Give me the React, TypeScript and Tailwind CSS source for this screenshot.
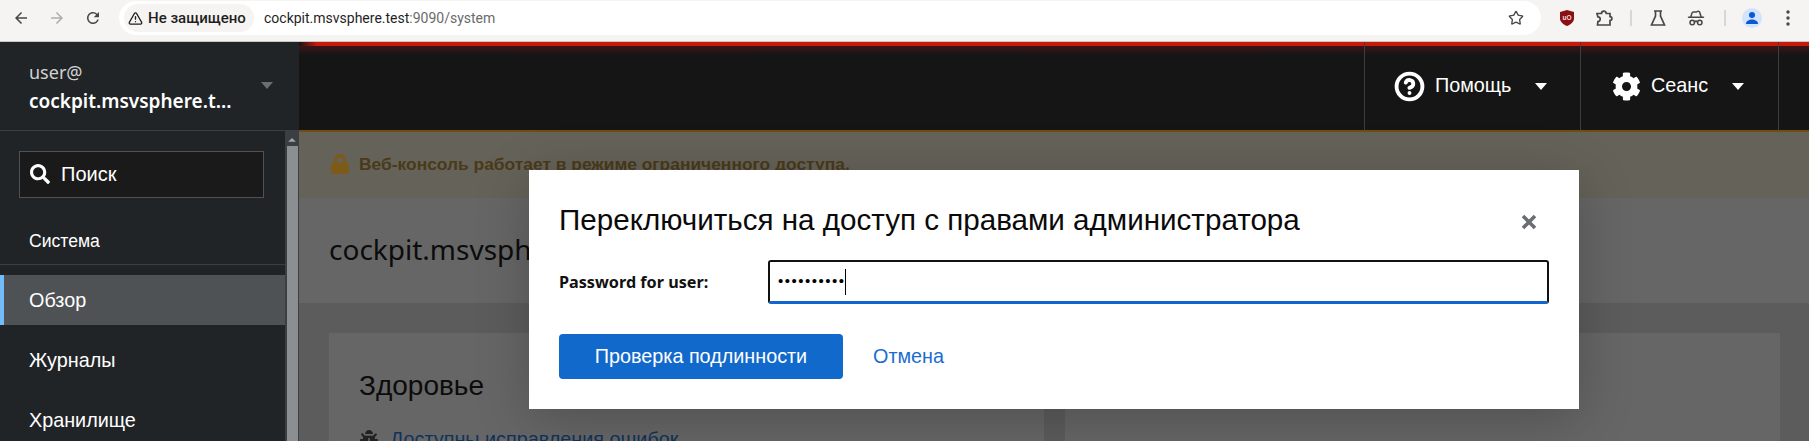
import React from "react";
import { Star, TriangleAlert, HatGlasses, CircleHelp } from "lucide-react";
import { FaCog, FaSearch, FaLock, FaBug } from "react-icons/fa";

const Caret = ({ cls }: { cls: string }) => (
  <svg width="12" height="7" viewBox="0 0 12 7" className={cls}><path d="M0 0h12L6 7z" fill="currentColor" /></svg>
);

const Nav = ({ label, active }: { label: string; active?: boolean }) => (
  <div className={`flex h-[50px] items-center pt-[2px] text-[19.8px] text-white ${active ? "border-l-4 border-[#73bcf7] bg-[#4f5255] pl-[25px]" : "pl-[29px]"}`}>{label}</div>
);

const ArrowIcon = ({ cls, flip }: { cls: string; flip?: boolean }) => (
  <svg width="18" height="18" viewBox="0 0 24 24" className={`${cls} ${flip ? "rotate-180" : ""}`}>
    <path d="M20 11H7.830l5.590-5.590L12 4l-8 8 8 8 1.410-1.410L7.830 13H20v-2z" fill="currentColor" />
  </svg>
);

const Menu = ({ w, label, icon }: { w: string; label: string; icon: React.ReactNode }) => (
  <div className={`flex h-full items-center border-l border-[#3c3f42] ${w}`}>
    {icon}
    <span className="ml-[10px] text-[19.8px] text-white">{label}</span>
    <Caret cls="ml-[24px] text-white" />
  </div>
);

export default function App() {
  return (
    <div className="flex h-[441px] w-[1809px] flex-col overflow-hidden bg-white font-['Liberation_Sans',sans-serif]">
      <div className="flex h-[42px] shrink-0 items-start border-b border-[#c8c8c6] bg-[#f6f4f2]">
        <div className="flex h-[36px] w-[119px] items-center gap-[18px] pl-[12px] text-[#474747]">
          <ArrowIcon cls="" />
          <ArrowIcon cls="text-[#adadab]" flip />
          <svg width="18" height="18" viewBox="0 0 24 24"><path d="M17.650 6.350A7.958 7.958 0 0012 4c-4.420 0-7.990 3.580-7.990 8s3.570 8 7.990 8c3.730 0 6.840-2.550 7.730-6h-2.080A5.990 5.990 0 0112 18c-3.310 0-6-2.690-6-6s2.690-6 6-6c1.660 0 3.140.690 4.220 1.780L13 11h7V4l-2.350 2.350z" fill="currentColor" /></svg>
        </div>
        <div className="mt-px flex h-[34px] w-[1422px] items-center rounded-full bg-white pl-[5px] pr-[16px]">
          <div className="flex h-[28px] w-[130px] items-center gap-[5px] rounded-full bg-[#f6f4f2] pl-[4px] font-['Roboto',sans-serif] text-[15px] font-medium text-[#1f1f1f]">
            <TriangleAlert size={15} strokeWidth={2.2} />
            <span>Не защищено</span>
          </div>
          <div className="ml-[10px] font-['Roboto',sans-serif] text-[14px] text-[#1f1f1f]">cockpit.msvsphere.test<span className="text-[#6a6a6a]">:9090/system</span></div>
          <Star size={16} strokeWidth={2} className="ml-auto mr-[1px] text-[#474747]" />
        </div>
        <div className="flex h-[36px] flex-1 items-center pl-[19px] text-[#474747]">
          <svg width="14" height="16" viewBox="0 0 14 16">
            <path d="M7 0l7 2v6.500c0 3.500-3.500 6-7 7.500-3.500-1.500-7-4-7-7.500V2z" fill="#8a1014" />
            <text x="7" y="9.500" textAnchor="middle" fontSize="6.500" fontWeight="700" fill="#f3dede">uO</text>
          </svg>
          <svg width="18" height="18" viewBox="0 0 18 18" className="ml-[21px]" fill="none" stroke="currentColor" strokeWidth="1.700">
            <path d="M2 4.500h4.500a2.400 2.400 0 0 1 4.800 0H15v3.200a1.900 1.900 0 0 1 0 3.800V16H2.500l.4-3.500a2.300 2.300 0 0 0 0-4.600L2 4.500z" />
          </svg>
          <div className="ml-[17px] h-[16px] w-[2px] bg-[#d9d7d4]" />
          <svg width="16" height="16" viewBox="0 0 16 16" className="ml-[18px]" fill="none" stroke="currentColor" strokeWidth="1.700">
            <path d="M4 1h8M5.500 1v5L1.500 15h13l-4-9V1" />
          </svg>
          <HatGlasses size={18} className="ml-[21px]" />
          <div className="ml-[19px] h-[16px] w-[2px] bg-[#d9d7d4]" />
          <div className="ml-[16px] flex h-[20px] w-[20px] items-center justify-center rounded-full bg-[#d3e3fd]">
            <svg width="14" height="14" viewBox="0 0 14 14"><circle cx="7" cy="4" r="3" fill="#0b57d0" /><path d="M1 13c0-3 3-4.500 6-4.500s6 1.500 6 4.500z" fill="#0b57d0" /></svg>
          </div>
          <svg width="4" height="16" viewBox="0 0 4 16" className="ml-[24px]" fill="currentColor"><circle cx="2" cy="2" r="1.700" /><circle cx="2" cy="8" r="1.700" /><circle cx="2" cy="14" r="1.700" /></svg>
        </div>
      </div>

      <div className="flex min-h-0 flex-1">
        <aside className="flex w-[299px] shrink-0 flex-col bg-[#212427]">
          <div className="flex h-[89px] shrink-0 items-center justify-between border-b border-[#3c3f42] pl-[29px] pr-[26px]">
            <div className="pt-[1px]">
              <div className="font-['Noto_Sans',sans-serif] text-[18px] leading-[26px] text-[#d2d2d2]">user@</div>
              <div className="mt-[3px] font-['Noto_Sans',sans-serif] text-[19px] font-semibold leading-[26px] text-white">cockpit.msvsphere.t...</div>
            </div>
            <Caret cls="mb-[2px] text-[#6a6e73]" />
          </div>
          <div className="flex min-h-0 flex-1">
            <div className="w-[285px]">
              <div className="ml-[19px] mt-[20px] flex h-[47px] w-[245px] items-center border border-[#4f5255] bg-[#1a1a1a] pb-[2px] pl-[10px] text-[20px] text-white">
                <FaSearch size={20} />
                <span className="ml-[11px]">Поиск</span>
              </div>
              <div className="flex h-[67px] items-end border-b border-[#3c3f42] pb-[10px] pl-[29px] text-[17.6px] text-white">Система</div>
              <div className="mt-[10px] flex flex-col gap-[10px]">
                <Nav label="Обзор" active />
                <Nav label="Журналы" />
                <Nav label="Хранилище" />
              </div>
            </div>
            <div className="flex w-[14px] flex-col items-center bg-[#3b3f43]">
              <svg width="8" height="4" viewBox="0 0 8 4" className="mt-[7px] text-[#a3a6a8]"><path d="M0 4h8L4 0z" fill="currentColor" /></svg>
              <div className="mt-[4px] h-full w-[11px] bg-[#8b8f92]" />
            </div>
          </div>
        </aside>

        <div className="relative flex min-w-0 flex-1 flex-col">
          <header className="relative flex h-[90px] shrink-0 justify-end border-b-2 border-[#6f4e13] bg-[#151515]">
            <div className="absolute inset-x-0 top-0">
              <div className="h-[4px] bg-[linear-gradient(to_right,#151515,#c9190b_18px)]" />
              <div className="h-[9px] bg-gradient-to-b from-[#3d1316] to-[#151515]" />
            </div>
            <div className="relative flex h-full">
              <Menu w="w-[216px] pl-[29px]" label="Помощь" icon={<CircleHelp size={31} strokeWidth={3} className="text-white" />} />
              <Menu w="w-[198px] pl-[31px]" label="Сеанс" icon={<FaCog size={29} className="text-white" />} />
              <div className="w-[31px] border-l border-[#3c3f42]" />
            </div>
          </header>

          <main className="flex min-h-0 flex-1 flex-col overflow-hidden bg-[#5c5c5c]">
            <div className="flex h-[66px] shrink-0 items-center bg-[#656259] pb-[2px] pl-[31px] text-[17.4px] font-bold text-[#4a3a1a]">
              <FaLock size={20} className="text-[#7d5a18]" />
              <span className="ml-[9px]">Веб-консоль работает в режиме ограниченного доступа.</span>
            </div>
            <div className="flex h-[105px] shrink-0 items-center bg-[#666666] pb-[3px] pl-[30px] font-['Noto_Sans',sans-serif] text-[28px] text-[#0c0c0c]">cockpit.msvsphere.test</div>
            <div className="flex gap-[21px] pl-[30px] pt-[30px]">
              <section className="h-[200px] w-[715px] bg-[#666666] pl-[30px] pt-[33px]">
                <h2 className="text-[28px] leading-[40px] text-[#0c0c0c]">Здоровье</h2>
                <div className="mt-[21px] flex items-center">
                  <FaBug size={18} className="ml-[1px] text-[#222222]" />
                  <span className="ml-[12px] text-[19.8px] leading-[24px] text-[#12325c]">Доступны исправления ошибок</span>
                </div>
              </section>
              <section className="h-[200px] w-[715px] bg-[#666666]" />
            </div>
          </main>

          <div role="dialog" className="absolute left-[230px] top-[128px] w-[1050px] bg-white px-[30px] pb-[30px] pt-[30px] shadow-[0_10px_50px_rgba(0,0,0,0.22)]">
            <div className="flex h-[40px] items-center justify-between">
              <h1 className="text-[29.6px] text-[#0a0a0a]">Переключиться на доступ с правами администратора</h1>
              <svg width="16" height="16" viewBox="0 0 16 16" className="mr-[12px] mt-[4px] text-[#6a6e73]"><path d="M2 2l12 12M14 2L2 14" stroke="currentColor" strokeWidth="3.600" /></svg>
            </div>
            <div className="mt-[20px] flex items-center">
              <label className="w-[209px] font-['Noto_Sans',sans-serif] text-[16.2px] font-bold text-[#111111]">Password for user:</label>
              <div className="flex h-[44px] w-[781px] items-center rounded-[3px] border-2 border-b-[3px] border-[#111111] border-b-[#1066cc] pl-[8px]">
                <span className="text-[15px] tracking-[1.500px] text-black">••••••••••</span>
                <div className="-ml-[1px] h-[26px] w-px bg-black" />
              </div>
            </div>
            <div className="mt-[30px] flex items-center">
              <button className="h-[45px] w-[284px] rounded-[4px] bg-[#1269cc] pt-[1px] text-[19.8px] text-white">Проверка подлинности</button>
              <span className="ml-[30px] pt-[1px] text-[19.8px] text-[#1a6dd0]">Отмена</span>
            </div>
          </div>
        </div>
      </div>
    </div>
  );
}
